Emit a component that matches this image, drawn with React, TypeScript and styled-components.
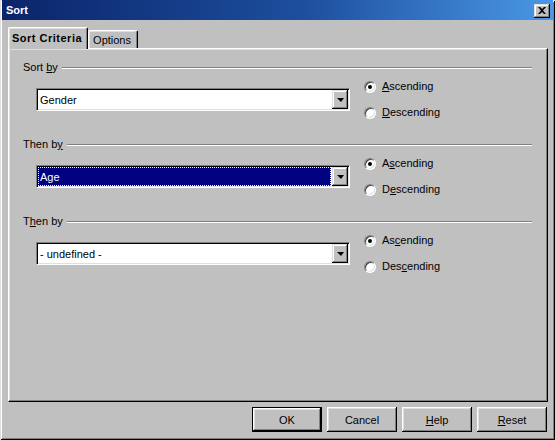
import React from "react";
import styled, { createGlobalStyle, css } from "styled-components";

const GlobalStyle = createGlobalStyle`
  html, body {
    margin: 0;
    padding: 0;
    background: #c0c0c0;
  }
  body {
    font-family: "Liberation Sans", Arial, sans-serif;
    font-size: 11px;
    color: #000;
  }
`;

// classic 3d edges
const raised = css`
  box-shadow: inset -1px -1px #000, inset 1px 1px #dfdfdf,
    inset -2px -2px #808080, inset 2px 2px #fff;
`;

const Window = styled.div`
  width: 555px;
  height: 440px;
  box-sizing: border-box;
  padding: 0 2px 2px 2px;
  background: #c0c0c0;
  box-shadow: inset 1px 1px #dfdfdf, inset -1px -1px #000,
    inset 2px 2px #fff, inset -2px -2px #808080;
  display: flex;
  flex-direction: column;
`;

const TitleBar = styled.div`
  height: 20px;
  flex: none;
  display: flex;
  align-items: center;
  justify-content: space-between;
  padding: 0 3px 0 4px;
  background: linear-gradient(to right, #0a246a 0%, #1d4f9e 55%, #4a98e6 100%);
  color: #fff;
  font-weight: bold;
  font-size: 11px;
`;

const CloseButton = styled.div`
  width: 16px;
  height: 14px;
  margin-top: 1px;
  background: #c0c0c0;
  ${raised};
  display: flex;
  align-items: center;
  justify-content: center;
`;

const Body = styled.div`
  flex: 1;
  display: flex;
  flex-direction: column;
  padding: 7px 5px 0 6px;
`;

const TabStrip = styled.div`
  height: 21px;
  display: flex;
  align-items: flex-end;
`;

const Tab = styled.div<{ $active?: boolean }>`
  box-sizing: border-box;
  border-top: 1px solid #fff;
  border-left: 1px solid #fff;
  border-right: 1px solid #000;
  border-radius: 2px 2px 0 0;
  box-shadow: inset -1px 0 #808080, inset 1px 1px #dfdfdf;
  background: #c0c0c0;
  display: flex;
  align-items: center;
  ${(p) =>
    p.$active
      ? css`
          height: 22px;
          margin-bottom: -1px;
          padding: 0 5px 1px 3px;
          font-weight: bold;
          letter-spacing: 0.5px;
          position: relative;
          z-index: 1;
        `
      : css`
          height: 18px;
          padding: 0 6px 0 4px;
        `}
`;

const Panel = styled.div`
  height: 354px;
  box-sizing: border-box;
  border: 1px solid;
  border-color: #fff #000 #000 #fff;
  box-shadow: inset -1px -1px #808080, inset 1px 1px #dfdfdf;
  padding: 12px 15px 0 14px;
  display: flex;
  flex-direction: column;
`;

const Section = styled.div`
  height: 77px;
  display: flex;
  flex-direction: column;
`;

const Header = styled.div`
  height: 13px;
  line-height: 13px;
  display: flex;
  align-items: center;
`;

const Etched = styled.div`
  flex: 1;
  margin-left: 4px;
  margin-top: 1px;
  border-top: 1px solid #808080;
  border-bottom: 1px solid #fff;
`;

const Row = styled.div`
  display: flex;
  margin-top: 6px;
  margin-left: 13px;
`;

const Combo = styled.div`
  width: 314px;
  height: 23px;
  margin-top: 8px;
  box-sizing: border-box;
  border: 1px solid;
  border-color: #808080 #fff #fff #808080;
  box-shadow: inset 1px 1px #000, inset -1px -1px #dfdfdf;
  background: #fff;
  display: flex;
  padding: 1px;
`;

const ComboText = styled.div<{ $selected?: boolean }>`
  flex: 1;
  display: flex;
  align-items: center;
  padding-left: 2px;
  margin-right: 1px;
  box-sizing: border-box;
  ${(p) =>
    p.$selected &&
    css`
      background: #000080;
      color: #fff;
      outline: 1px dotted #ffffb0;
      outline-offset: -1px;
    `}
`;

const DropButton = styled.div`
  width: 16px;
  background: #c0c0c0;
  ${raised};
  display: flex;
  align-items: center;
  justify-content: center;
  &::after {
    content: "";
    border-left: 4px solid transparent;
    border-right: 3px solid transparent;
    border-top: 4px solid #000;
    margin-top: 1px;
  }
`;

const RadioGroup = styled.div`
  margin-left: 14px;
  display: flex;
  flex-direction: column;
  gap: 13px;
`;

const Radio = styled.div`
  height: 13px;
  line-height: 13px;
  display: flex;
  align-items: center;
`;

const RadioDot = styled.span<{ $checked?: boolean }>`
  width: 12px;
  height: 12px;
  box-sizing: border-box;
  border-radius: 50%;
  border: 1px solid;
  border-color: #808080 #fff #fff #808080;
  box-shadow: inset 1px 1px #404040, inset -1px -1px #dfdfdf;
  background: #fff;
  margin-right: 6px;
  display: flex;
  align-items: center;
  justify-content: center;
  &::after {
    content: "";
    width: 4px;
    height: 4px;
    border-radius: 50%;
    background: ${(p) => (p.$checked ? "#000" : "transparent")};
  }
`;

const ButtonBar = styled.div`
  display: flex;
  justify-content: flex-end;
  gap: 5px;
  margin-top: 5px;
  padding-right: 1px;
`;

const Button = styled.div<{ $default?: boolean }>`
  width: 70px;
  height: 25px;
  box-sizing: border-box;
  display: flex;
  align-items: center;
  justify-content: center;
  box-shadow: inset -1px -1px #000, inset 1px 1px #fff,
    inset -2px -2px #808080, inset 2px 2px #dfdfdf;
  ${(p) =>
    p.$default &&
    css`
      border: 1px solid #000;
    `}
`;

// label with one underlined access key
function Key({ text, at }: { text: string; at: number }) {
  return (
    <span>
      {text.slice(0, at)}
      <u>{text[at]}</u>
      {text.slice(at + 1)}
    </span>
  );
}

type Crit = {
  label: [string, number];
  value: string;
  selected?: boolean;
  asc: number;
  desc: number;
};

const criteria: Crit[] = [
  { label: ["Sort by", 5], value: "Gender", asc: 0, desc: 0 },
  { label: ["Then by", 6], value: "Age", selected: true, asc: 1, desc: 1 },
  { label: ["Then by", 1], value: "- undefined -", asc: 2, desc: 3 },
];

export default function App() {
  return (
    <>
      <GlobalStyle />
      <Window>
        <TitleBar>
          <span>Sort</span>
          <CloseButton>
            <svg width="8" height="7" viewBox="0 0 8 7">
              <path d="M0 0h2l2 2 2-2h2L5 3.5 8 7H6L4 5 2 7H0l3-3.5z" fill="#000" />
            </svg>
          </CloseButton>
        </TitleBar>
        <Body>
          <TabStrip>
            <Tab $active>Sort Criteria</Tab>
            <Tab>Options</Tab>
          </TabStrip>
          <Panel>
            {criteria.map((c, i) => (
              <Section key={i}>
                <Header>
                  <Key text={c.label[0]} at={c.label[1]} />
                  <Etched />
                </Header>
                <Row>
                  <Combo>
                    <ComboText $selected={c.selected}>{c.value}</ComboText>
                    <DropButton />
                  </Combo>
                  <RadioGroup>
                    <Radio>
                      <RadioDot $checked />
                      <Key text="Ascending" at={c.asc} />
                    </Radio>
                    <Radio>
                      <RadioDot />
                      <Key text="Descending" at={c.desc} />
                    </Radio>
                  </RadioGroup>
                </Row>
              </Section>
            ))}
          </Panel>
          <ButtonBar>
            <Button $default>OK</Button>
            <Button>Cancel</Button>
            <Button>
              <Key text="Help" at={0} />
            </Button>
            <Button>
              <Key text="Reset" at={0} />
            </Button>
          </ButtonBar>
        </Body>
      </Window>
    </>
  );
}
